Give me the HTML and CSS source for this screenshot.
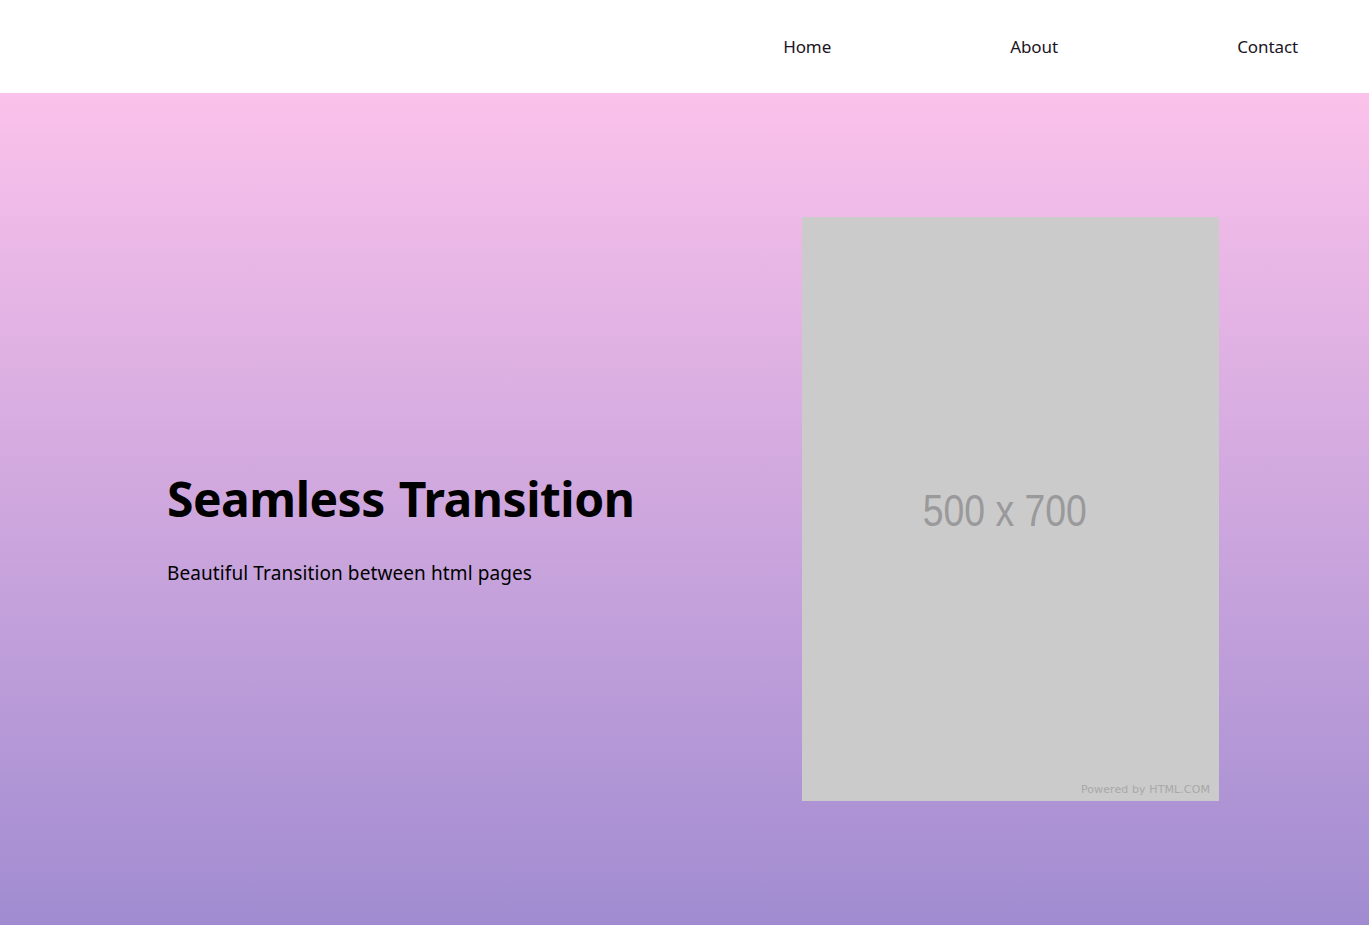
FILE: index.html
```html
<!DOCTYPE html>
<html lang="en">
<head>
<meta charset="utf-8">
<title>Seamless Transition</title>
<link rel="stylesheet" href="styles.css">
</head>
<body>
<header class="header">
  <nav class="nav">
    <a class="nav-link" href="#">Home</a>
    <a class="nav-link" href="#">About</a>
    <a class="nav-link" href="#">Contact</a>
  </nav>
</header>
<main class="hero">
  <div class="hero-text">
    <h1 class="title">Seamless Transition</h1>
    <p class="subtitle">Beautiful Transition between html pages</p>
  </div>
  <div class="placeholder">
    <span class="placeholder-size">500 x 700</span>
    <span class="placeholder-credit">Powered by HTML.COM</span>
  </div>
</main>
</body>
</html>
```
FILE: styles.css
```css
* { box-sizing: border-box; }
html, body { margin: 0; padding: 0; }
body {
  font-family: "Noto Sans", "Open Sans", sans-serif;
  color: #000;
  height: 925px;
  overflow: hidden;
}
.header {
  height: 93px;
  background: #fff;
  display: flex;
  justify-content: flex-end;
  align-items: center;
}
.nav {
  display: grid;
  grid-template-columns: 227px 227px auto;
  padding-right: 71px;
}
.nav-link {
  font-size: 17px;
  color: #1a1424;
  text-decoration: none;
  letter-spacing: -0.1px;
}
.hero {
  height: 832px;
  background: linear-gradient(to bottom, #fbc2eb 0%, #a18cd1 100%);
  display: flex;
  align-items: center;
  padding-left: 167px;
}
.hero-text {
  width: 635px;
  padding-top: 38px;
}
.title {
  margin: 0;
  font-size: 48px;
  font-weight: 700;
  line-height: 1.2;
  letter-spacing: -0.5px;
  word-spacing: 2px;
}
.subtitle {
  margin: 32px 0 0;
  font-size: 19px;
  letter-spacing: 0.1px;
}
.placeholder {
  position: relative;
  width: 417px;
  height: 584px;
  background: #cbcbcb;
  display: flex;
  align-items: center;
  justify-content: center;
}
.placeholder-size {
  font-family: "Liberation Sans", Arial, sans-serif;
  font-size: 45px;
  color: #9a999b;
  margin-left: -12px;
  margin-top: 4px;
  transform: scaleX(0.83);
}
.placeholder-credit {
  position: absolute;
  right: 9px;
  bottom: 5px;
  font-family: "DejaVu Sans", sans-serif;
  font-size: 11px;
  color: #a8a8a8;
  letter-spacing: 0.1px;
}
```
